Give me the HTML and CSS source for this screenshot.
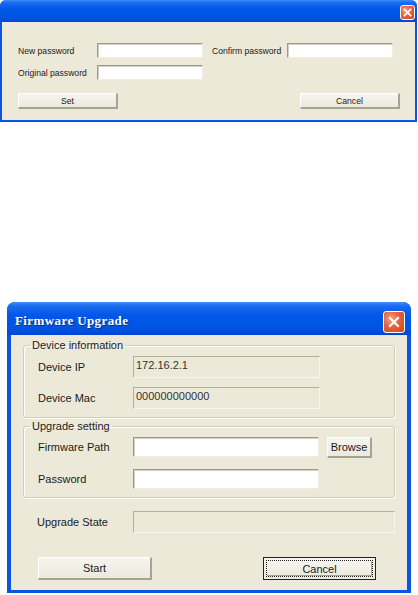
FILE: index.html
```html
<!DOCTYPE html>
<html lang="en">
<head>
    <meta charset="UTF-8">
    <meta name="viewport" content="width=device-width, initial-scale=1.0">
    <title>Password / Firmware Upgrade</title>
    <link rel="stylesheet" href="styles.css">
</head>
<body>
    <!-- password dialog -->
    <div class="window small">
        <div class="titlebar">
            <span class="title"></span>
            <button class="close">
                <svg viewBox="0 0 10 10" width="9" height="9"><path d="M1.5 1.5 L8.5 8.5 M8.5 1.5 L1.5 8.5" stroke="#fff" stroke-width="1.8" stroke-linecap="square"/></svg>
            </button>
        </div>
        <div class="body">
            <div class="pw-grid">
                <label>New password</label>
                <div><input class="edit" type="password"></div>
                <label>Confirm password</label>
                <div><input class="edit" type="password"></div>
                <label>Original password</label>
                <div><input class="edit" type="password"></div>
            </div>
            <div class="pw-buttons">
                <button class="btn">Set</button>
                <button class="btn">Cancel</button>
            </div>
        </div>
    </div>

    <!-- firmware upgrade dialog -->
    <div class="window big">
        <div class="titlebar">
            <span class="title">Firmware Upgrade</span>
            <button class="close">
                <svg viewBox="0 0 12 12" width="12" height="12"><path d="M2 2 L10 10 M10 2 L2 10" stroke="#fff" stroke-width="2.2" stroke-linecap="square"/></svg>
            </button>
        </div>
        <div class="body">
            <fieldset class="group">
                <legend>Device information</legend>
                <div class="row">
                    <label>Device IP</label>
                    <div class="readonly">172.16.2.1</div>
                </div>
                <div class="row">
                    <label>Device Mac</label>
                    <div class="readonly">000000000000</div>
                </div>
            </fieldset>
            <fieldset class="group second">
                <legend>Upgrade setting</legend>
                <div class="row">
                    <label>Firmware Path</label>
                    <input class="edit" type="text">
                    <button class="btn browse">Browse</button>
                </div>
                <div class="row">
                    <label>Password</label>
                    <input class="edit" type="password">
                </div>
            </fieldset>
            <div class="row state">
                <label>Upgrade State</label>
                <div class="readonly wide"></div>
            </div>
            <div class="actions">
                <button class="btn start">Start</button>
                <button class="btn cancel default"><span>Cancel</span></button>
            </div>
        </div>
    </div>
</body>
</html>
```
FILE: styles.css
```css
body {
    margin: 0;
    background: #fff;
    font-family: "Liberation Sans", Arial, sans-serif;
    color: #1a1a1a;
}
.window {
    background: #0a56e0;
    border-radius: 6px 6px 0 0;
}
.titlebar {
    display: flex;
    align-items: center;
    justify-content: space-between;
    background: linear-gradient(#3d8ff8 0%, #1a6cf0 12%, #0357e6 40%, #0054e3 80%, #0046d3 100%);
    border-radius: 6px 6px 0 0;
}
.close {
    display: flex;
    align-items: center;
    justify-content: center;
    padding: 0;
    border: 1px solid #fff;
    border-radius: 3px;
    background: radial-gradient(circle at 35% 35%, #f2a285 0%, #e4623a 45%, #d2441b 100%);
}
.body {
    background: #ece9d8;
}

/* small password window */
.small {
    width: 417px;
    height: 122px;
}
.small .titlebar {
    height: 20px;
    padding: 2px 2px 0 8px;
}
.small .close {
    width: 15px;
    height: 15px;
}
.small .body {
    margin: 0 2px;
    height: 98px;
    box-sizing: border-box;
    padding: 21px 15px 0 16px;
    font-size: 8.6px;
}
.pw-grid {
    display: grid;
    grid-template-columns: 79px 115px 75px 106px;
    grid-auto-rows: 15px;
    row-gap: 7px;
    align-items: center;
}
.pw-grid .edit {
    width: 106px;
    height: 15px;
}
.pw-buttons {
    display: flex;
    justify-content: space-between;
    margin-top: 13px;
}
.pw-buttons .btn {
    width: 100px;
    height: 16px;
    font-size: 8.6px;
}

/* controls */
.edit {
    display: block;
    box-sizing: border-box;
    margin: 0;
    background: #fff;
    border: 1px solid;
    border-color: #9c9a8e #eeede6 #eeede6 #9c9a8e;
    box-shadow: inset 1px 1px 0 #d4d0c4;
    font: inherit;
}
.btn {
    box-sizing: border-box;
    margin: 0;
    padding: 0;
    background: linear-gradient(#f6f5ef, #ece9dd);
    border: 1px solid;
    border-color: #fefefe #a5a296 #a5a296 #fefefe;
    border-bottom-width: 2px;
    border-right-width: 2px;
    font-family: inherit;
    color: #1a1a1a;
}
.readonly {
    box-sizing: border-box;
    background: #ece9d8;
    border: 1px solid;
    border-color: #b3b0a3 #f7f6f0 #f7f6f0 #b3b0a3;
    padding: 2px 2px 0;
    line-height: 13px;
    color: #333;
}

/* firmware window */
.big {
    width: 404px;
    height: 291px;
    margin: 180px 0 0 7px;
    border-radius: 8px 8px 0 0;
}
.big .titlebar {
    height: 29px;
    padding: 4px 6px 0 8px;
    border-radius: 8px 8px 0 0;
}
.big .title {
    font-family: "Liberation Serif", "Times New Roman", serif;
    font-weight: bold;
    font-size: 13px;
    letter-spacing: 0.4px;
    color: #fff;
    text-shadow: 1px 1px 0 #0a2e8c;
}
.big .close {
    width: 22px;
    height: 22px;
    margin-top: 2px;
}
.big .body {
    margin: 0 4px;
    height: 255px;
    box-sizing: border-box;
    padding: 4px 12px 0;
    font-size: 11px;
}
.group {
    margin: 0;
    padding: 5px 14px 8px;
    border: 1px solid #d0cdbd;
    border-radius: 3px;
    box-shadow: 1px 1px 0 #fff, inset 1px 1px 0 #fff;
}
.group legend {
    margin-left: -8px;
    padding: 0 2px;
    line-height: 12px;
    color: #222;
}
.group.second {
    margin-top: 2px;
}
.row {
    display: flex;
    align-items: center;
}
.row label {
    width: 95px;
    flex-shrink: 0;
}
.group .readonly {
    width: 187px;
    height: 22px;
}
.group .row + .row {
    margin-top: 9px;
}
.second .row {
    height: 20px;
}
.second .row + .row {
    margin-top: 12px;
}
.second .edit {
    width: 186px;
    height: 20px;
}
.browse {
    width: 45px;
    height: 21px;
    margin-left: 8px;
    font-size: 11px;
}
.state {
    margin-top: 13px;
    padding-left: 14px;
}
.state label {
    width: 96px;
}
.wide {
    flex: 1;
    height: 22px;
}
.actions {
    display: flex;
    margin-top: 24px;
    padding-left: 15px;
}
.actions .btn {
    height: 23px;
    font-size: 11px;
}
.start {
    width: 114px;
}
.cancel {
    width: 113px;
    margin-left: 111px;
}
.default {
    border: 1px solid #222;
    padding: 2px;
}
.default span {
    display: flex;
    align-items: center;
    justify-content: center;
    height: 100%;
    box-sizing: border-box;
    border: 1px dotted #222;
    box-shadow: inset -1px -1px 0 #a5a296;
}
```
